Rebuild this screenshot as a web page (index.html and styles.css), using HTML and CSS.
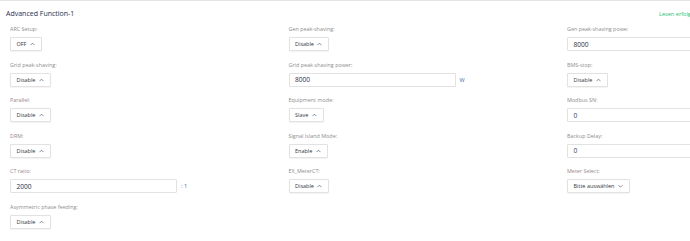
FILE: index.html
```html
<!DOCTYPE html>
<html lang="de">
<head>
<meta charset="utf-8">
<title>Advanced Function-1</title>
<link rel="stylesheet" href="styles.css">
</head>
<body>
<div class="card">
  <div class="head">
    <h2 class="title">Advanced Function-1</h2>
    <span class="status">Lesen erfolgreich</span>
  </div>
  <div class="grid">
    <div class="item">
      <div class="label">ARC Setup:</div>
      <div class="select"><span>OFF</span><svg class="chev" viewBox="0 0 6 4"><path d="M0.6 3.4 L3 1 L5.4 3.4"/></svg></div>
    </div>
    <div class="item">
      <div class="label">Gen peak-shaving:</div>
      <div class="select"><span>Disable</span><svg class="chev" viewBox="0 0 6 4"><path d="M0.6 3.4 L3 1 L5.4 3.4"/></svg></div>
    </div>
    <div class="item">
      <div class="label">Gen peak-shaving powe:</div>
      <div class="row"><div class="input">8000</div></div>
    </div>

    <div class="item">
      <div class="label">Grid peak-shaving:</div>
      <div class="select"><span>Disable</span><svg class="chev" viewBox="0 0 6 4"><path d="M0.6 3.4 L3 1 L5.4 3.4"/></svg></div>
    </div>
    <div class="item">
      <div class="label">Grid peak-shaving power:</div>
      <div class="row"><div class="input">8000</div><span class="unit">W</span></div>
    </div>
    <div class="item">
      <div class="label">BMS-stop:</div>
      <div class="select"><span>Disable</span><svg class="chev" viewBox="0 0 6 4"><path d="M0.6 3.4 L3 1 L5.4 3.4"/></svg></div>
    </div>

    <div class="item">
      <div class="label tint">Parallel:</div>
      <div class="select"><span>Disable</span><svg class="chev" viewBox="0 0 6 4"><path d="M0.6 3.4 L3 1 L5.4 3.4"/></svg></div>
    </div>
    <div class="item">
      <div class="label">Equipment mode:</div>
      <div class="select"><span>Slave</span><svg class="chev" viewBox="0 0 6 4"><path d="M0.6 3.4 L3 1 L5.4 3.4"/></svg></div>
    </div>
    <div class="item">
      <div class="label">Modbus SN:</div>
      <div class="row"><div class="input blue">0</div></div>
    </div>

    <div class="item">
      <div class="label tint">DRM:</div>
      <div class="select"><span>Disable</span><svg class="chev" viewBox="0 0 6 4"><path d="M0.6 3.4 L3 1 L5.4 3.4"/></svg></div>
    </div>
    <div class="item">
      <div class="label">Signal Island Mode:</div>
      <div class="select"><span>Enable</span><svg class="chev" viewBox="0 0 6 4"><path d="M0.6 3.4 L3 1 L5.4 3.4"/></svg></div>
    </div>
    <div class="item">
      <div class="label">Backup Delay:</div>
      <div class="row"><div class="input blue">0</div></div>
    </div>

    <div class="item">
      <div class="label tint">CT ratio:</div>
      <div class="row"><div class="input">2000</div><span class="unit">: 1</span></div>
    </div>
    <div class="item">
      <div class="label">EX_MeterCT:</div>
      <div class="select"><span>Disable</span><svg class="chev" viewBox="0 0 6 4"><path d="M0.6 3.4 L3 1 L5.4 3.4"/></svg></div>
    </div>
    <div class="item">
      <div class="label tint">Meter Select:</div>
      <div class="select"><span>Bitte auswählen</span><svg class="chev" viewBox="0 0 6 4"><path d="M0.6 1 L3 3.4 L5.4 1"/></svg></div>
    </div>

    <div class="item">
      <div class="label">Asymmetric phase feeding:</div>
      <div class="select"><span>Disable</span><svg class="chev" viewBox="0 0 6 4"><path d="M0.6 3.4 L3 1 L5.4 3.4"/></svg></div>
    </div>
  </div>
</div>
</body>
</html>
```

FILE: styles.css
```css
html, body {
  margin: 0;
  padding: 0;
  background: #ffffff;
  overflow: hidden;
}

body {
  width: 690px;
  height: 241px;
  font-family: "Open Sans", "Noto Sans", "Liberation Sans", sans-serif;
}

.card {
  border-top: 1px solid #e4e4e4;
  width: 690px;
}

.head {
  display: flex;
  align-items: center;
  height: 10px;
  padding: 8px 0 0 6px;
}

.title {
  flex: 1;
  margin: 0;
  font-size: 7px;
  line-height: 10px;
  font-weight: 400;
  color: #1f2d4d;
}

.status {
  flex: 0 0 31px;
  min-width: 0;
  width: 31px;
  white-space: nowrap;
  font-size: 5.6px;
  line-height: 10px;
  color: #1dbf73;
}

.grid {
  display: grid;
  grid-template-columns: repeat(3, 278.5px);
  row-gap: 9.5px;
  padding: 6px 0 0 10px;
}

.item {
  display: flex;
  flex-direction: column;
  align-items: flex-start;
}

.label {
  font-size: 5.4px;
  line-height: 8px;
  height: 8px;
  margin-bottom: 4px;
  color: #8e8e8e;
  white-space: nowrap;
}

.label.tint {
  color: #9a8787;
}

.select {
  display: flex;
  align-items: center;
  gap: 3.5px;
  height: 14px;
  box-sizing: border-box;
  padding: 0 6px 0 5.5px;
  border: 1px solid #e2e2e2;
  border-radius: 1px;
  background: #fff;
  box-shadow: 0 0.5px 1px rgba(0, 0, 0, 0.05);
  font-size: 5.5px;
  color: #333a44;
  white-space: nowrap;
}

.chev {
  width: 5px;
  height: 4px;
  fill: none;
  stroke: #4a5568;
  stroke-width: 0.8;
}

.row {
  display: flex;
  align-items: center;
  gap: 4px;
}

.input {
  width: 167px;
  height: 14px;
  box-sizing: border-box;
  display: flex;
  align-items: center;
  padding-left: 5.5px;
  border: 1px solid #e2e2e2;
  border-radius: 1px;
  background: #fff;
  font-size: 6.6px;
  color: #2a3142;
}

.input.blue {
  color: #27466f;
}

.unit {
  font-size: 5.6px;
  color: #3c6e9e;
  white-space: nowrap;
}
```
